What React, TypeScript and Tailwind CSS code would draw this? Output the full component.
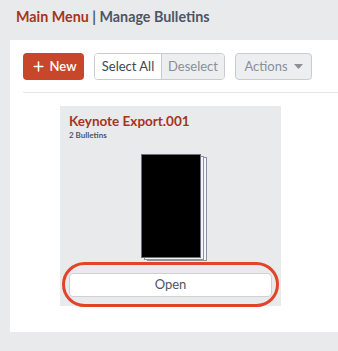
import { Plus } from "lucide-react";

export default function App() {
  return (
    <div className="w-[338px] h-[351px] bg-[#e9eaec] overflow-hidden" style={{ fontFamily: "Lato, 'Noto Sans', sans-serif" }}>
      <div className="h-[40px] pl-[16px] pt-[6px] text-[14.3px] font-bold">
        <span className="text-[#a5341d]">Main Menu</span>
        <span className="text-[#4d5566]"> | Manage Bulletins</span>
      </div>

      <div className="ml-[10px] h-[292px] bg-white pl-[13px] pt-[13px]">
        <div className="flex items-center h-[27px]">
          <button className="flex items-center gap-[4px] h-[27px] w-[61px] justify-center rounded-[4px] bg-[#c8472b] text-white text-[13px] font-semibold">
            <Plus className="w-[15px] h-[15px]" strokeWidth={2.5} />
            New
          </button>
          <div className="ml-[10px] flex h-[27px] border border-[#c9cbd0] rounded-[4px] overflow-hidden text-[13px]">
            <div className="w-[66px] flex items-center justify-center text-[#3f4553] bg-white">Select All</div>
            <div className="w-[63px] flex items-center justify-center text-[#8a8f9a] bg-[#eceef0] border-l border-[#c9cbd0]">Deselect</div>
          </div>
          <div className="ml-[10px] flex items-center gap-[6px] w-[77px] justify-center h-[27px] border border-[#c9cbd0] rounded-[4px] bg-[#eceef0] text-[#8a8f9a] text-[13px]">
            Actions
            <svg width="9" height="6" viewBox="0 0 9 6"><path d="M0 0h9L4.5 5z" fill="#8a8f9a" /></svg>
          </div>
        </div>
        <div className="mt-[12px] h-px bg-[#e6e7ea]" />

        <div className="ml-[37px] mt-[13px] w-[221px] h-[200px] bg-[#e9eaec] px-[9px] pt-[7px]">
          <div className="text-[13.5px] font-bold text-[#a5341d] leading-[17px]">Keynote Export.001</div>
          <div className="text-[8px] font-bold text-[#4d5566] leading-[10px]">2 Bulletins</div>

          <div className="relative mt-[14px] w-[66px] h-[108px] ml-[72px]">
            <div className="absolute left-[6px] top-[3px] w-[60px] h-[104px] bg-[#f4f5f7] border border-[#8c92a0]" />
            <div className="absolute left-[3px] top-[1.5px] w-[60px] h-[104px] bg-[#f4f5f7] border border-[#8c92a0]" />
            <div className="absolute left-0 top-0 w-[60px] h-[104px] bg-black border border-[#6b7080]" />
          </div>

          <div className="relative -mx-[7px] mt-0 h-[45px] rounded-full border-[3px] border-[#e2432a] flex items-center px-[4px]">
            <button className="w-full h-[24px] rounded-[4px] bg-white border border-[#cfd1d6] text-[13px] text-[#4d5566]">Open</button>
          </div>
        </div>
      </div>
    </div>
  );
}
